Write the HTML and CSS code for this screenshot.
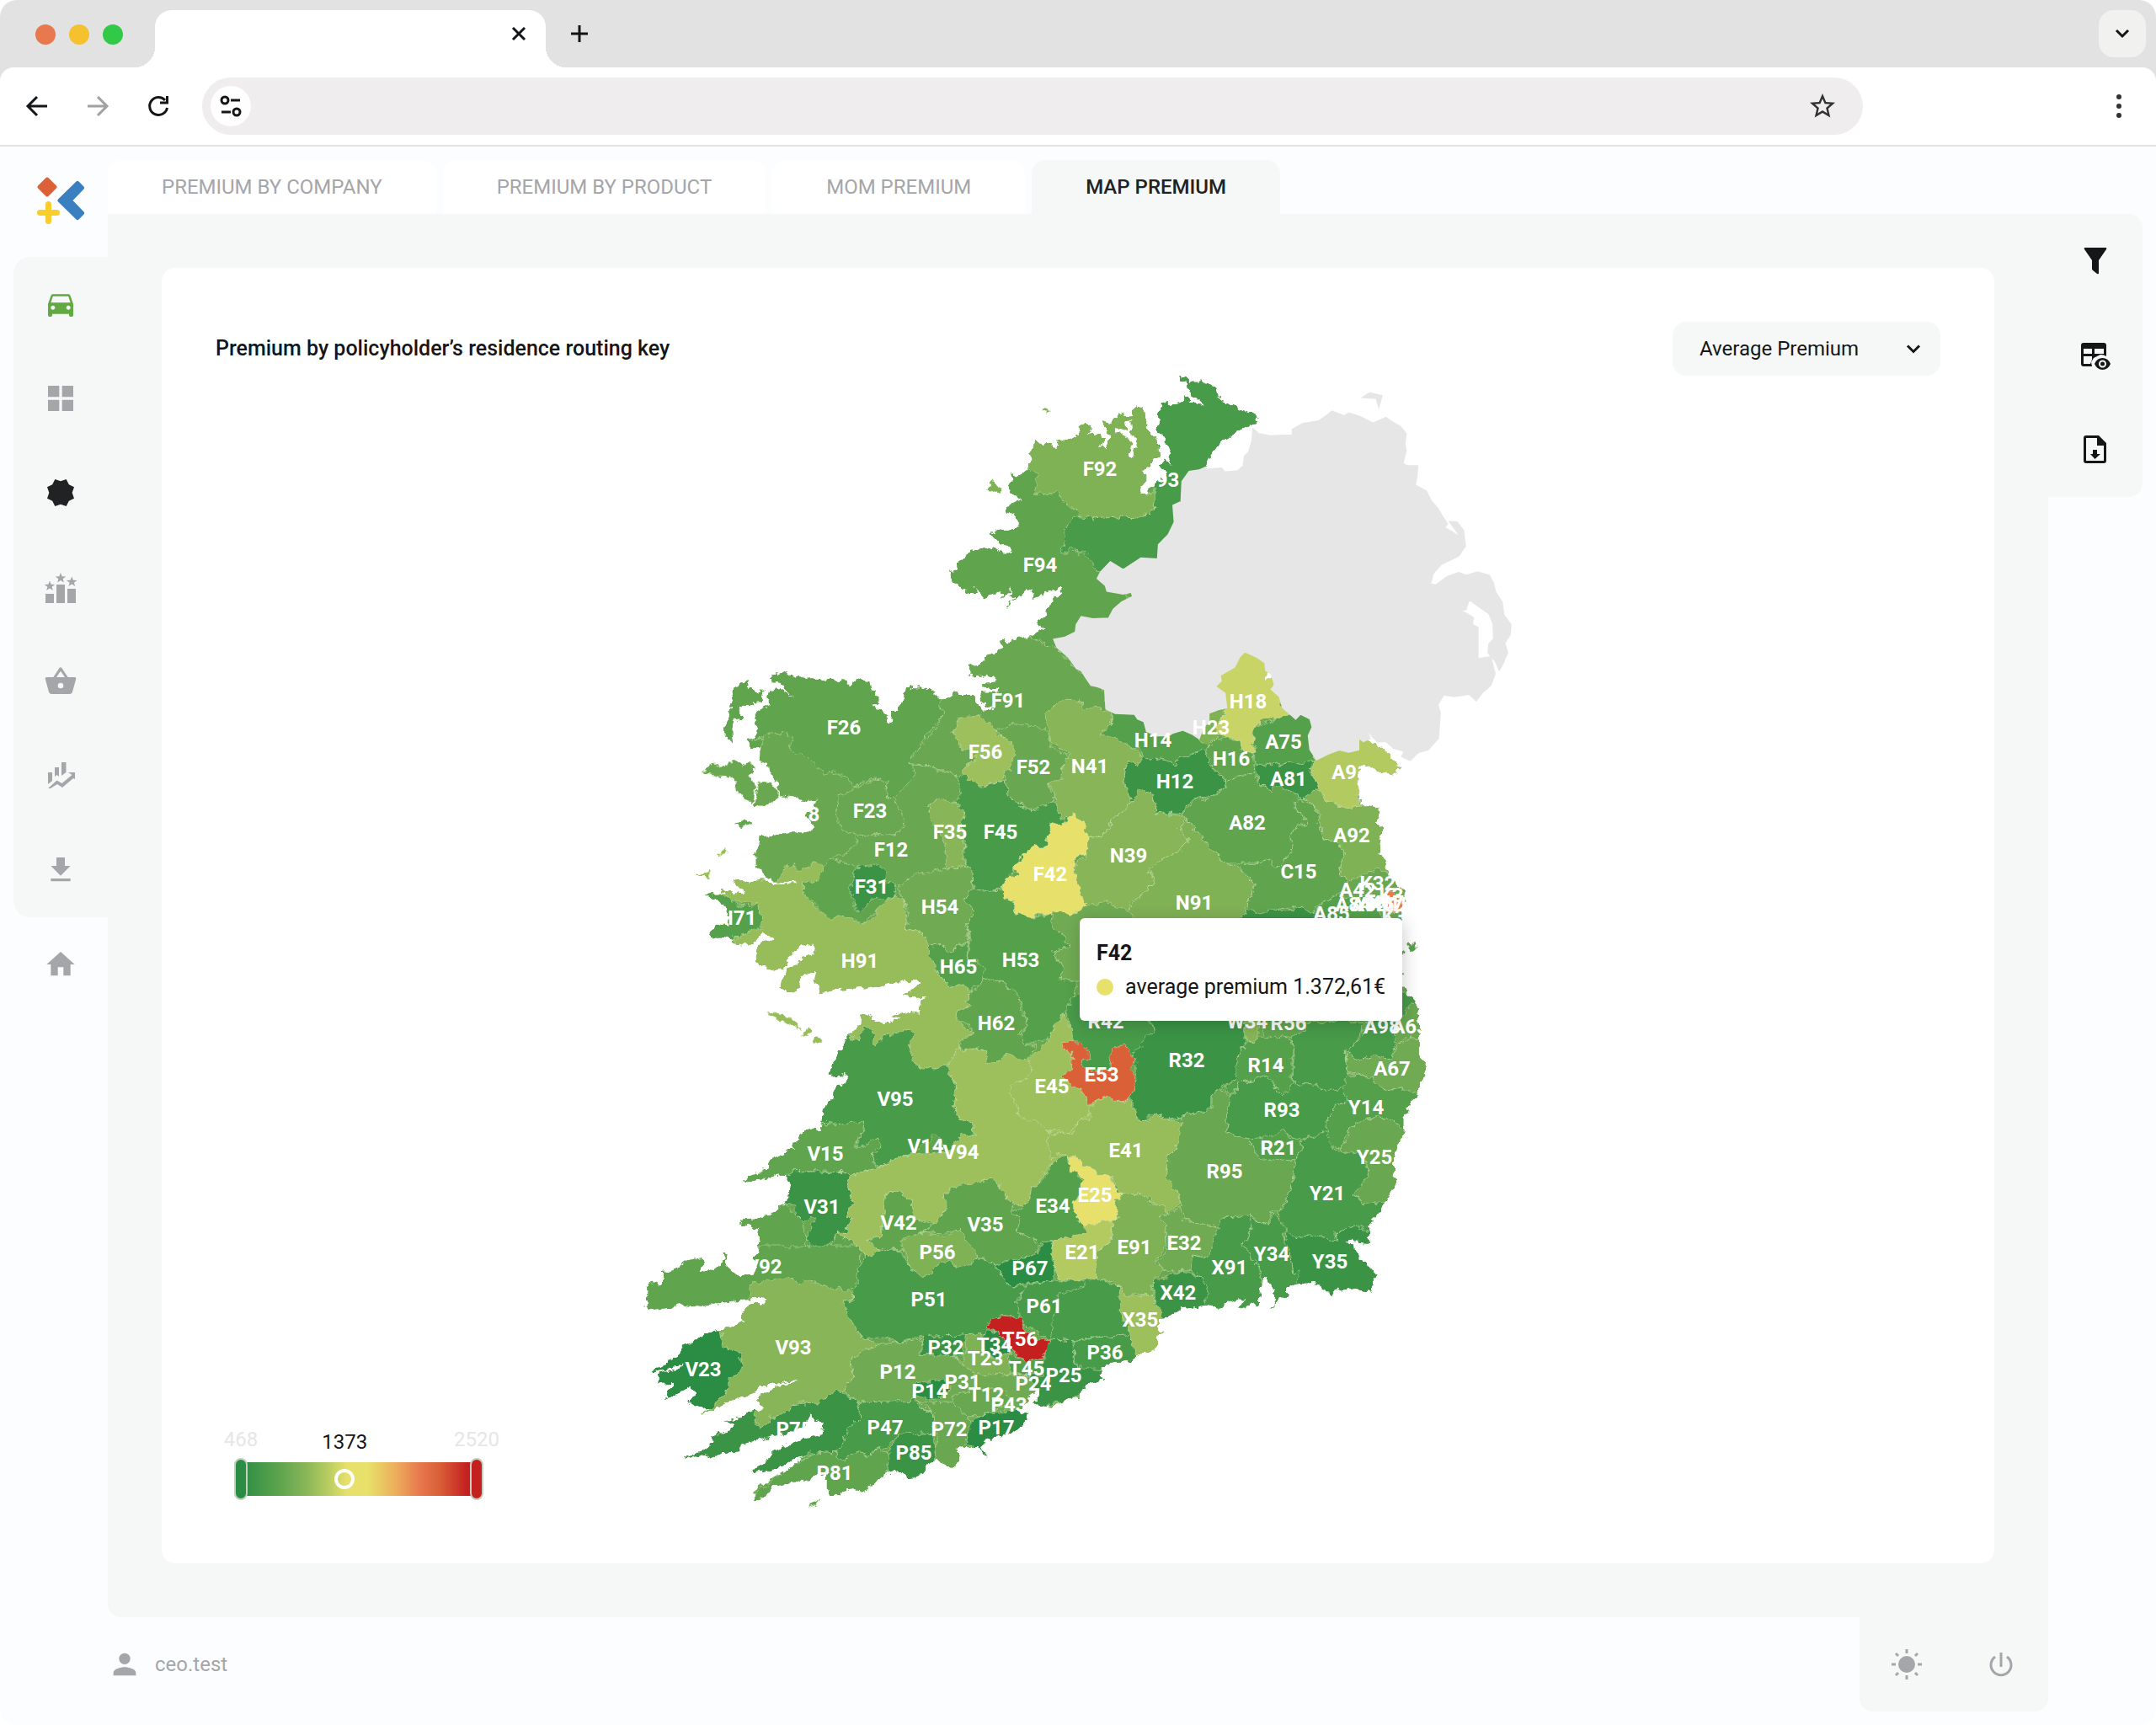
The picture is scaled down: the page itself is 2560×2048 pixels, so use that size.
FILE: index.html
```html
<!DOCTYPE html>
<html lang="en">
<head>
<meta charset="utf-8">
<title>Map premium</title>
<link rel="stylesheet" href="styles.css">
</head>
<body>
<header class="browser">
  <div class="tabstrip">
    <div class="lights"><span class="light red"></span><span class="light yellow"></span><span class="light green"></span></div>
    <div class="browser-tab">
      <button class="plain" type="button" aria-label="Close tab"><svg width="40" height="40" viewBox="-20 -20 40 40"><path class="ink s3" d="M-7-7 7 7M7-7-7 7"/></svg></button>
    </div>
    <button class="plain new-tab" type="button" aria-label="New tab"><svg width="40" height="40" viewBox="-20 -20 40 40"><path class="ink s3" d="M-10 0H10M0-10V10"/></svg></button>
    <button class="plain tab-search" type="button" aria-label="Search tabs"><svg width="32" height="32" viewBox="-16 -16 32 32"><path class="ink s3" d="M-7-4 0 3 7-4"/></svg></button>
  </div>
  <div class="toolbar">
    <button class="plain tool" type="button" aria-label="Back"><svg width="32" height="32" viewBox="-16 -16 32 32"><path class="ink s3" d="M12 0H-10M0-11-11 0 0 11"/></svg></button>
    <button class="plain tool faded" type="button" aria-label="Forward"><svg width="32" height="32" viewBox="-16 -16 32 32"><path class="ink s3" d="M-12 0H10M0-11 11 0 0 11"/></svg></button>
    <button class="plain tool" type="button" aria-label="Reload"><svg width="32" height="32" viewBox="-16 -16 32 32"><path class="ink s3" d="M8-7A10.500 10.500 0 1 0 10.500 2M2-4H10.500V-12"/></svg></button>
    <div class="address">
      <button class="plain site-info" type="button" aria-label="Site information"><svg width="32" height="32" viewBox="-16 -16 32 32"><circle class="ink s3" cx="-7" cy="-7" r="4"/><path class="ink s3" d="M0-7H11M-11 7H0"/><circle class="ink s3" cx="7" cy="7" r="4"/></svg></button>
      <input type="text" aria-label="Address">
      <button class="plain" type="button" aria-label="Bookmark"><svg width="36" height="36" viewBox="0 0 24 24"><path fill="#303234" d="M22 9.240l-7.190-.620L12 2 9.190 8.630 2 9.240l5.460 4.730L5.820 21 12 17.270 18.180 21l-1.630-7.030L22 9.240zM12 15.400l-3.760 2.270 1-4.280-3.320-2.880 4.380-.380L12 6.100l1.710 4.040 4.380.380-3.320 2.880 1 4.280L12 15.400z"/></svg></button>
    </div>
    <button class="plain tool" type="button" aria-label="Browser menu"><svg width="32" height="32" viewBox="-16 -16 32 32"><g fill="#303234"><circle cy="-11" r="3"/><circle r="3"/><circle cy="11" r="3"/></g></svg></button>
  </div>
</header>

<div class="app">
  <aside class="side">
    <a class="logo" href="#" aria-label="Home page">
      <svg width="60" height="60" viewBox="42 208 60 60">
        <path fill="#dc6038" stroke="#dc6038" stroke-width="4" stroke-linejoin="round" d="M56 212.500 65.500 222 56 231.500 46.500 222z"/>
        <path stroke="#f8ce2c" stroke-width="7" stroke-linecap="round" d="M57.500 242.500V262.500M47.500 252.500H67.500"/>
        <path fill="#3a80c0" stroke="#3a80c0" stroke-width="5" stroke-linejoin="round" d="M92 217.500 97.500 223 83 238 97.500 253 92 258.500 71 238z"/>
      </svg>
    </a>
    <nav class="side-nav" aria-label="Sections">
      <a href="#" class="green-icon" aria-label="Motor"><svg width="40" height="40" viewBox="0 0 24 24"><path d="M18.920 6.010C18.720 5.420 18.160 5 17.500 5h-11c-.660 0-1.210.420-1.420 1.010L3 12v8c0 .550.450 1 1 1h1c.550 0 1-.450 1-1v-1h12v1c0 .550.450 1 1 1h1c.550 0 1-.450 1-1v-8zM6.500 16c-.830 0-1.500-.670-1.500-1.500S5.670 13 6.500 13s1.500.670 1.500 1.500S7.330 16 6.500 16zm11 0c-.830 0-1.500-.670-1.500-1.500s.670-1.500 1.500-1.500 1.500.670 1.500 1.500-.670 1.500-1.500 1.500zM5 11l1.500-4.500h11L19 11z"/></svg></a>
      <a href="#" aria-label="Dashboard"><svg width="40" height="40" viewBox="0 0 24 24"><path d="M3 3h8v8H3zM13 3h8v8h-8zM3 13h8v8H3zM13 13h8v8h-8z"/></svg></a>
      <a href="#" class="current" aria-label="Premium" aria-current="page"><svg width="40" height="40" viewBox="-12 -12 24 24"><path d="M4-9.600 5.900-5.900 9.600-4 8.200 0 9.600 4 5.900 5.900 4 9.600 0 8.200-4 9.600-5.900 5.900-9.600 4-8.200 0-9.600-4-5.900-5.900-4-9.600 0-8.200z"/></svg></a>
      <a href="#" aria-label="Ranking"><svg width="40" height="40" viewBox="-20 -20 40 40"><path d="M-18 8h10V19h-10zM-5-3H5V19H-5zM8 2H18V19H8z"/><path d="M0-17l1.600 4.200 4.600.200-3.600 2.800 1.300 4.400L0-7.900l-3.900 2.500 1.300-4.400-3.600-2.800 4.600-.200z"/><path d="M-13-7.500l1.600 4.200 4.600.200-3.600 2.800 1.300 4.400L-13 1.600l-3.900 2.500 1.300-4.400-3.600-2.800 4.600-.200zM13.300-12.500l1.600 4.200 4.600.200-3.600 2.800 1.300 4.400-3.900-2.500-3.900 2.500 1.300-4.400L7-8.100l4.600-.200z"/></svg></a>
      <a href="#" aria-label="Products"><svg width="40" height="40" viewBox="0 0 24 24"><path fill-rule="evenodd" d="M17.200 9 12.800 2.400a1 1 0 0 0-1.700 0L6.800 9H2c-.600 0-1 .500-1 1l.100.300 2.500 9.200c.200.900 1 1.500 1.900 1.500h13c.900 0 1.700-.600 1.900-1.500L23 10c0-.600-.500-1-1-1zM9 9l3-4.400L15 9zm3 8a2 2 0 1 1 0-4 2 2 0 0 1 0 4z"/></svg></a>
      <a href="#" aria-label="Trends"><svg width="40" height="40" viewBox="-20 -20 40 40"><path d="M-15-4h5v10l-5 4zM-7-10h5V1l-2.500-2L-7 1zM1-16h5.500V-4L1 0zM-15 15-4.500 5.500 1.500 9 13.500-1 9-4h8V4l-2-1L2 14-4 10-12 15z"/></svg></a>
      <a href="#" aria-label="Downloads"><svg width="40" height="40" viewBox="0 0 24 24"><path d="M19 9h-4V3H9v6H5l7 7zM5 18v2h14v-2z"/></svg></a>
    </nav>
    <a class="side-home" href="#" aria-label="Home"><svg width="40" height="40" viewBox="0 0 24 24"><path d="M10 20v-6h4v6h5v-8h3L12 3 2 12h3v8z"/></svg></a>
  </aside>

  <main class="main">
    <nav class="tabs" aria-label="Premium views">
      <a href="#">PREMIUM BY COMPANY</a>
      <a href="#">PREMIUM BY PRODUCT</a>
      <a href="#">MOM PREMIUM</a>
      <a href="#" class="active" aria-current="page">MAP PREMIUM</a>
    </nav>
    <div class="panel">
      <section class="card">
        <div class="card-head">
          <h1>Premium by policyholder’s residence routing key</h1>
          <div class="picker">
            <select aria-label="Measure"><option>Average Premium</option></select>
            <svg width="24" height="24" viewBox="-12 -12 24 24"><path class="ink s3" d="M-7-3.500 0 3.500 7-3.500"/></svg>
          </div>
        </div>
        <div class="map-wrap">
          <svg class="map" viewBox="256 446 2048 1346" role="img" aria-label="Average premium by routing key, Ireland">
            <defs>
              <filter id="rough" x="-2%" y="-2%" width="104%" height="104%" color-interpolation-filters="sRGB">
                <feTurbulence type="fractalNoise" baseFrequency="0.12" numOctaves="3" seed="4"/>
                <feDisplacementMap in="SourceGraphic" scale="10" xChannelSelector="R" yChannelSelector="G"/>
                <feOffset dx="-1" dy="0"/>
              </filter>
              <clipPath id="land">
                <path transform="translate(1240 420) scale(.38265 .33333)" d="M427 80 440 85 452 98 490 98 520 112 538 125 540 145 550 168 585 180 612 198 640 208 658 215 665 232 655 248 630 262 600 278 580 295 548 315 530 340 515 370 500 405 500 700 350 800 80 830-20 780-55 600-55 430-45 420-40 370-35 345-28 310 0 318 25 318 38 340 48 325 45 305 60 308 95 300 112 285 108 258 128 242 140 252 148 262 130 290 150 278 160 292 180 285 190 305 170 325 190 335 205 300 200 275 186 262 188 238 205 245 215 235 228 215 240 212 275 220 272 208 290 190 305 188 315 215 318 240 312 262 335 280 345 300 362 330 362 360 345 380 330 400 300 420 325 430 328 448 300 480 295 500 312 505 330 480 350 455 378 440 390 420 370 410 358 395 375 382 397 400 388 375 393 350 385 325 370 295 348 268 357 240 355 215 365 195 362 178 385 175 395 185 410 178 437 172 437 148 455 165 450 178 498 182 480 160 458 150 450 130 447 102 430 95z"/>
                <path transform="translate(740 420) scale(.38265 .33333)" d="M1268 385 1255 405 1245 430 1220 440 1208 418 1212 455 1198 465 1205 495 1235 520 1200 540 1192 560 1215 575 1228 595 1228 620 1180 628 1138 645 1160 660 1170 675 1200 680 1208 710 1180 710 1145 685 1150 700 1115 697 1085 705 1065 720 1040 740 1042 765 1012 775 1020 800 1018 812 1070 838 1075 855 1097 855 1095 830 1122 868 1140 858 1178 845 1180 872 1205 830 1200 862 1222 868 1190 910 1198 890 1230 872 1250 848 1278 835 1272 872 1300 862 1330 845 1360 828 1365 850 1350 872 1338 870 1335 885 1312 908 1315 935 1288 958 1295 975 1315 978 1290 990 1268 1005 1225 1015 1195 1025 1188 1010 1180 1025 1180 1050 1150 1075 1130 1080 1115 1100 1080 1115 1078 1140 1090 1158 1130 1145 1165 1165 1125 1170 1118 1185 1165 1195 1160 1205 1120 1205 1108 1212 1115 1245 1155 1268 1120 1275 1100 1245 1085 1215 1040 1215 1028 1208 1015 1220 990 1230 960 1208 935 1190 878 1188 870 1230 850 1275 838 1275 832 1322 820 1290 790 1265 775 1250 800 1240 778 1215 790 1200 775 1195 770 1170 730 1155 715 1180 700 1178 695 1168 650 1160 620 1165 610 1155 560 1158 535 1150 500 1132 460 1152 465 1170 485 1175 530 1222 500 1205 485 1190 455 1200 448 1235 460 1250 430 1265 410 1280 410 1310 420 1345 415 1360 390 1370 400 1410 430 1405 435 1385 455 1370 450 1395 435 1410 430 1440 445 1470 475 1520 2000 1520 2000 1100 1400 385z"/>
                <path transform="translate(740 420) scale(.38265 .33333)" d="M385 1165 395 1190 425 1210 438 1200 430 1240 400 1240 412 1250 385 1250 360 1262 372 1290 345 1310 340 1340 345 1380 315 1365 318 1330 330 1300 335 1265 340 1240 330 1225 345 1190z"/>
                <path transform="translate(740 780) scale(.35714 .33333)" d="M460 350 475 380 515 420 520 470 525 495 580 505 620 515 645 508 640 530 600 560 620 580 640 610 610 625 530 625 510 635 455 640 450 680 443 715 445 750 480 780 515 803 575 796 580 804 510 812 465 790 425 805 400 795 368 795 375 810 410 830 410 850 380 845 370 835 322 828 350 845 315 845 280 850 300 862 345 885 345 900 350 930 355 960 315 950 300 975 285 992 330 995 370 1000 370 1020 400 1030 440 1010 465 980 505 995 505 1015 470 1010 450 1040 445 1070 445 1095 470 1095 490 1115 535 1110 555 1070 590 1030 640 1020 635 1060 600 1070 570 1100 545 1110 540 1140 530 1155 525 1185 580 1190 590 1160 605 1130 640 1120 635 1145 650 1175 655 1195 700 1185 780 1180 850 1172 900 1165 940 1155 990 1155 970 1180 935 1200 960 1215 1020 1210 990 1225 985 1255 995 1280 965 1260 940 1268 900 1275 925 1290 880 1300 868 1305 830 1285 800 1272 788 1290 790 1315 750 1350 800 1420 2000 1420 2000 250 460 250z"/>
                <path transform="translate(1240 840) scale(.35714 .33333)" d="M-100-100 1045-100 1045 105 1080 105 1090 120 1140 160 1180 200 1190 215 1155 240 1120 230 1085 205 1050 210 1045 260 1045 310 1060 345 1118 360 1108 410 1130 425 1115 470 1122 520 1135 560 1150 600 1190 640 1205 655 1195 690 1190 730 1195 750 1180 780 1170 800 1165 1000 1213 1025 1245 1100 1240 1200-100 1200z"/>
                <path transform="translate(740 1180) scale(.35714 .33333)" d="M748 150 735 185 720 205 705 250 682 290 740 285 750 300 735 320 705 345 695 380 668 420 665 460 660 490 630 478 600 490 585 500 590 518 570 530 565 548 530 570 485 600 480 625 440 640 405 667 440 665 480 655 530 645 550 655 560 665 555 700 550 745 520 760 490 790 445 800 400 802 395 820 455 838 458 870 455 905 440 1020 1600 1020 1600 100z"/>
                <path transform="translate(740 1460) scale(.40816 .33333)" d="M395 0 402 60 385 95 395 120 378 155 345 160 320 148 300 125 305 85 290 82 298 110 265 140 222 155 235 120 230 100 185 110 150 145 120 150 120 185 105 205 100 180 75 200 70 220 68 275 80 285 145 278 165 260 180 270 230 275 290 258 330 250 375 245 415 240 410 265 370 265 365 285 345 300 350 325 320 345 285 358 245 370 215 390 175 420 165 445 120 480 85 505 130 500 175 475 170 490 135 505 102 515 105 548 155 545 130 580 125 605 165 580 200 555 212 590 190 615 230 635 255 632 232 658 270 635 300 615 335 600 380 580 410 555 460 545 515 535 490 550 450 558 430 575 400 590 390 610 410 635 400 640 375 650 300 685 325 690 315 715 250 735 265 760 245 780 205 800 178 815 230 805 240 795 255 812 290 795 340 790 345 765 405 745 440 735 500 715 540 690 540 660 585 690 580 730 550 735 500 760 440 790 380 865 440 855 480 830 535 800 490 850 430 890 385 930 390 960 415 955 440 910 475 905 530 895 600 860 595 885 595 925 600 945 625 945 660 920 695 935 740 895 775 868 810 860 840 885 870 870 890 830 920 825 965 848 980 810 970 785 990 765 1005 780 1040 780 1060 812 1045 775 1060 745 1085 740 1130 725 1175 685 1180 650 1150 655 1190 600 1180 590 1220 570 1200 620 1250 630 1290 605 1330 600 1330 575 1350 555 1405 530 1385 520 1400 490 1430 470 1480 470 1500 437 1545 430 1560 380 1560 0z"/>
                <path transform="translate(1240 1160) scale(.33333)" d="M300 1100 275 1200 330 1350 400 1320 405 1280 425 1262 385 1250 365 1235 390 1215 430 1215 455 1205 490 1180 570 1170 640 1175 665 1150 715 1150 700 1175 760 1165 775 1130 780 1070 795 1065 800 1080 825 1115 825 1150 810 1180 835 1150 870 1130 870 1110 890 1095 915 1045 890 1070 880 1095 960 1088 990 1100 1020 1130 1060 1110 1110 1108 1165 1122 1170 1090 1190 1055 1165 1040 1145 1010 1125 1000 1110 975 1105 950 1075 945 1095 925 1105 942 1160 948 1160 900 1165 880 1205 820 1250 750 1258 720 1245 690 1245 650 1275 570 1285 550 1285 500 1310 440 1335 420 1335 400 1365 310 1340 290 1340 200 1330 100 1300 65 1270 20 0 20 0 1100z"/>
              </clipPath>
            </defs>

            <g filter="url(#rough)">
              <g clip-path="url(#land)">
                <rect x="700" y="400" width="1100" height="1450" class="c5"/>

                <g class="north-west">
                  <path class="c4" d="M950 380H1568V1100L1345 1048 1308 1035 1305 1020 1272 1018 1262 1000H950z"/>
                  <path class="c5" d="M1050 1000H1262L1272 1018 1308 1035 1345 1048 1400 1115 1500 1200 1500 1270 1380 1320 1270 1400 1060 1510 940 1465 895 1465 895 1440 920 1410 925 1390 945 1375 975 1330 998 1285 990 1278 980 1245 990 1230z"/>
                </g>
                <g class="north-east">
                  <path class="c2" d="M62 630 90 600 85 580 110 575 150 590 185 575 205 585 245 578 290 585 330 570 345 530 345 480 330 440 330 60 700 60 700 300 440 500 430 780 160 775 150 740 125 705 110 715 88 688 75 712 55 710 65 680z"/>
                  <path class="c7" d="M-60 300-45 420-20 428-22 470-30 495 0 500 30 500 45 490 65 530 100 555 118 588 140 580 150 590 185 575 205 585 245 578 290 585 330 570 345 530 345 480 320 500 330 440 368 360 333 270 330 150-60 150z"/>
                </g>
                <g class="west">
                  <path class="c4" d="M300 20H1060V150L1055 185 1070 205 1020 265 995 300 985 325 960 350 958 380 965 385 970 430 940 465 915 490 900 505 875 495 880 445 835 432 800 445 765 465 755 430 700 410 675 420 640 380 605 350 565 340 555 320 570 290 535 265 500 275 400 300 300 310z"/>
                  <path class="c5" d="M765 465 800 455 835 435 880 440 875 495 905 505 920 540 930 570 940 600 920 625 870 635 800 635 735 620 720 590 712 540 715 495 760 478z"/>
                  <path class="line" d="M775 635 778 665 750 695 715 710 690 715 685 735 650 790M958 380 1010 385 1050 405 1085 415 1110 420"/>
                  <path class="c4" d="M600 800 640 790 690 715 755 740 905 850 850 900 800 945 690 930 600 840z"/>
                  <path class="c8" d="M1015 535 1055 505 1110 520 1135 545 1125 600 1140 640 1135 745 1070 755 1080 710 1065 640 1035 600 1015 570z"/>
                  <path class="c2" d="M1110 420 1150 430 1200 455 1275 445 1280 490 1310 520 1360 545 1400 525 1450 520 1480 560 1520 580 1430 680 1300 760 1270 830 1220 835 1165 825 1160 745 1140 740 1140 640 1125 600 1135 545 1100 520 1125 490z"/>
                  <path class="c5" d="M1240 265 1300 238 1405 255 1420 290 1425 325 1480 350 1460 400 1475 440 1415 455 1435 490 1430 520 1360 545 1310 520 1280 490 1275 445 1270 410 1300 350 1275 290z"/>
                  <path class="c10" d="M1125 215 1190 210 1240 255 1245 280 1275 285 1295 315 1305 350 1290 400 1270 410 1265 445 1225 450 1190 460 1150 435 1130 415 1145 385 1175 365 1150 325 1120 325 1120 295 1100 265z"/>
                  <path class="c6" d="M1430 910 1425 950 1460 985 1485 1030 1430 1050 1450 1080 1465 1115 1450 1145 1500 1150 1568 1160 1800 1160 1800 850 1568 850z"/>
                </g>
                <g class="east">
                  <path class="c8" d="M205 90 245 110 290 140 315 150 328 190 312 210 280 185 265 235 275 290 290 335 265 370 225 395 215 440 190 465 150 460 120 390 60 400 40 345 35 300 15 270 65 255 60 220 85 160 55 145 20 120 20 75 3 40 12 20 40-10 80-33 125-20 135 8 170-8 228 25 225 65z"/>
                  <path class="c8" d="M290 335 325 293 350 300 380 340 365 380 400 375 475 390 450 430 480 480 440 520 400 535 375 560 350 580 370 620 330 665 300 690 280 725 245 715 215 690 150 705 140 715 105 640 100 560 145 525 150 460 190 465 215 440 225 395 265 370z"/>
                  <path class="c7" d="M475 400 520 450 560 510 610 555 665 585 705 630 680 690 665 750 660 800 300 800 300 745 280 725 330 665 370 620 350 580 400 535 440 520 480 480 450 430z"/>
                  <path class="c1" d="M265 235 280 185 312 210 330 170 355 190 370 180 425 190 440 210 445 185 500 160 540 150 550 190 570 225 610 260 605 290 580 300 545 330 545 315 515 318 480 345 460 380 400 375 365 380 380 340 350 300 325 293 290 335 275 290z"/>
                  <path class="c3" d="M190 95 225 65 228 15 300 15 330 30 350 60 540 60 545 150 500 160 445 185 440 210 425 190 370 180 355 190 330 170 322 140 290 140 245 110z"/>
                  <path class="c4" d="M575 110 655 115 660 155 700 165 710 200 700 235 610 260 570 225 550 190 540 145 550 135z"/>
                  <path class="c7" d="M540 0 600-10 605 50 590 80 575 110 550 135 540 130 515 100 520 60z"/>
                  <path class="c3" d="M690 80 730 55 770 45 800 25 830 15 905 5 905 170 900 185 860 200 825 195 790 205 760 195 740 205 705 200 700 165 705 150 690 110z"/>
                  <path class="c1" d="M700 205 740 205 760 195 790 205 825 195 860 200 905 185 890 230 915 285 865 330 845 325 835 300 780 290 765 280 755 295 715 270 710 235z"/>
                  <path class="c7" d="M865 325 915 285 930 330 980 335 985 360 1060 350 1140 350 1160 600 1110 575 1060 600 1015 615 980 590 1000 520 970 475 935 470 915 420 915 370 890 345z"/>
                  <path class="c11" d="M895 185 905 120 980 80 1200 90 1220 220 1130 260 1045 260 1045 320 1060 350 985 360 980 340 945 330 930 330 920 285 915 280 890 235z"/>
                  <path class="c4" d="M845 330 890 345 915 370 915 420 935 470 970 475 1000 520 980 590 1015 615 1000 650 960 675 900 710 890 740 860 715 800 715 750 720 730 745 680 745 680 690 705 630 665 585 640 555 710 555 755 540 780 575 830 495 820 460 830 430 875 415 860 380 835 365z"/>
                  <path class="c4" d="M460 380 515 318 545 330 605 290 610 260 700 235 715 270 755 295 765 280 835 300 845 325 865 330 835 340 835 365 860 380 875 415 830 430 820 460 830 495 800 545 780 575 760 560 755 540 710 555 640 555 610 555 560 510 520 450 475 400z"/>
                  <path class="c1" d="M655 750 680 720 720 735 760 715 800 725 840 710 880 725 900 740 900 800 650 800z"/>
                  <path class="c3" d="M900 740 930 690 990 665 1030 700 1060 670 1110 680 1130 800 900 800z"/>
                  <path class="hot1" d="M1120 665 1150 655 1195 690 1192 725 1150 735 1130 700z"/>
                </g>
                <g class="north-east">
                  <path class="c12" d="M500 1040H740V1260L765 1285 720 1300 680 1305 645 1345 655 1370 648 1395 660 1420 640 1422 612 1410 612 1375 560 1365 535 1340 540 1300 568 1285 560 1210 500 1185z"/>
                </g>
                <g class="west">
                  <path class="yellow" d="M1505 558 1535 585 1540 610 1552 640 1545 705 1510 705 1495 740 1510 800 1530 860 1545 890 1485 920 1455 905 1430 905 1425 920 1380 918 1360 928 1305 915 1298 865 1270 862 1262 830 1270 795 1290 780 1320 775 1300 750 1335 705 1365 675 1410 675 1410 645 1425 590 1470 595 1485 565z"/>
                  <path class="c6" d="M915 820 975 770 1000 775 1070 755 1135 745 1160 745 1165 825 1140 865 1170 900 1145 950 1150 1010 1085 1050 1060 1025 1015 1030 1010 1000 975 975 945 970 950 910z"/>
                  <path class="c3" d="M1165 825 1220 835 1270 830 1270 862 1298 865 1305 915 1360 928 1425 920 1425 950 1460 985 1485 1030 1430 1050 1465 1115 1450 1145 1500 1155 1510 1180 1490 1260 1450 1300 1410 1365 1340 1380 1320 1350 1350 1310 1310 1200 1280 1180 1265 1150 1205 1150 1180 1100 1145 1070 1155 1020 1145 950 1170 900 1140 865z"/>
                  <path class="c9" d="M905 850 935 870 945 930 945 970 975 975 1010 1000 1025 1040 1015 1060 1035 1085 1060 1150 1100 1175 1140 1170 1155 1195 1145 1225 1160 1245 1110 1260 1110 1285 1170 1345 1120 1365 1120 1400 1080 1450 1040 1470 1000 1470 965 1445 700 1400 700 1280 440 1250 380 1030 370 985 460 970 465 930 450 880 350 870 240 840 360 780 515 800 545 745 570 740 575 765 600 765 630 730 675 745 650 790 630 805 600 800 600 840 640 890 690 930 740 925 800 945 825 940 850 900 875 870z"/>
                  <path class="c3" d="M1015 1030 1060 1025 1085 1050 1150 1015 1145 1070 1180 1090 1205 1110 1200 1150 1165 1195 1140 1170 1100 1175 1060 1150 1045 1115 1035 1085 1015 1060z"/>
                  <path class="c1" d="M775 750 830 738 865 745 880 770 880 800 905 805 910 845 870 870 850 855 820 870 810 890 780 908 770 865 755 830 770 790z"/>
                  <path class="c3" d="M240 840 355 850 360 875 430 890 450 875 465 930 455 965 400 985 380 1000 240 1020z"/>
                </g>
                <g class="mid-west">
                  <path class="c2" d="M600 150 750 150 785 165 805 120 825 125 840 185 880 140 890 150 950 125 970 140 955 190 965 245 1000 270 1040 270 1080 255 1095 260 1095 300 1110 330 1100 400 1120 440 1160 455 1168 500 1120 510 1100 560 960 570 900 590 850 620 830 570 860 545 850 520 770 555 800 490 805 455 740 465 665 460 600 440z"/>
                  <path class="c4" d="M660 460 740 465 805 450 800 490 765 550 850 520 862 545 830 570 842 622 810 628 755 655 740 635 570 632 555 650 380 690 380 460z"/>
                  <path class="c4" d="M380 745 540 745 600 810 610 870 600 935 680 930 715 850 780 900 815 940 790 1020 380 1020z"/>
                  <path class="c1" d="M540 650 570 632 740 635 755 655 745 680 770 740 745 780 760 800 740 850 715 850 690 890 680 930 600 935 630 890 610 870 640 800 600 810 580 790 575 755 540 745z"/>
                  <path class="c10" d="M1080 255 1120 195 1205 195 1215 240 1240 245 1275 215 1345 240 1410 170 1465 70 1500 140 1568 200 1650 200 1650 600 1480 570 1430 600 1395 650 1390 680 1360 685 1355 730 1335 755 1300 750 1275 725 1275 705 1245 675 1225 658 1190 665 1150 690 1110 685 1070 715 1080 755 1065 790 1040 815 980 805 965 760 960 730 910 700 875 710 870 780 860 870 820 870 850 915 815 940 780 900 740 870 712 850 740 850 760 800 745 780 770 740 745 680 755 655 810 628 850 620 900 590 960 570 1080 560 1130 500 1168 505 1165 460 1120 440 1100 400 1110 330 1095 300z"/>
                  <path class="line" d="M1345 240 1362 265 1345 305 1295 320 1290 360 1315 400 1320 440 1380 455 1415 490 1440 480 1485 505 1510 455 1555 430 1555 395M1415 490 1425 540 1430 600"/>
                  <path class="c4" d="M1155-5 1205-50 1265-50 1280-15 1315-10 1320 50 1350 110 1315 145 1340 180 1375 185 1345 240 1275 215 1240 245 1210 240 1205 195 1120 195 1130 160 1170 145 1145 105 1110 85 1110 60 1160 45 1145 25z"/>
                  <path class="c4" d="M985 555 1040 495 1065 530 1080 565 1020 570 960 570z"/>
                  <path class="c4" d="M875 710 910 700 960 730 965 760 980 805 1025 820 1000 850 935 880 935 910 850 912 815 875 860 870z"/>
                  <path class="c4" d="M1070 715 1110 685 1190 665 1225 658 1275 705 1275 725 1300 750 1295 780 1320 810 1315 845 1385 890 1380 930 1330 940 1290 960 1230 965 1180 930 1140 880 1120 840 1065 855 1000 850 1025 825 1065 790 1080 755z"/>
                  <path class="c3" d="M1430 600 1480 570 1485 600 1530 670 1600 690 1600 850 1430 880 1385 890 1315 845 1320 810 1295 775 1335 755 1355 730 1360 685 1390 680z"/>
                </g>
                <g class="south-west">
                  <path class="c4" d="M50 60H690V230L375 240 350 300 50 300z"/>
                  <path class="c8" d="M375 190 420 180 495 175 515 195 530 180 605 205 660 215 678 240 640 265 655 300 680 350 700 385 755 410 700 430 665 465 675 515 640 575 600 590 575 615 500 620 475 655 430 670 405 715 385 680 300 680 200 680 260 630 295 590 310 540 345 500 345 440 290 415 285 355 340 300 370 235z"/>
                  <path class="c0" d="M50 400 285 355 290 415 345 440 345 500 310 540 295 590 260 630 220 660 50 640z"/>
                  <path class="c1" d="M385 690 405 715 430 670 475 655 500 620 575 615 600 590 625 573 685 610 690 670 655 715 640 770 620 790 530 800 500 860 350 900 150 830 250 670 385 640z"/>
                  <path class="c6" d="M755 410 800 400 870 390 865 445 960 445 1010 500 1050 515 1130 515 1200 520 1200 640 1020 680 870 640 850 610 690 615 640 575 675 515 665 465 700 430z"/>
                  <path class="c4" d="M370 960 470 860 560 795 620 790 640 825 690 790 720 800 740 780 780 800 770 870 700 960 540 1000z"/>
                  <path class="c2" d="M690 615 850 610 870 640 905 650 905 725 800 730 770 775 740 780 720 800 690 790 640 825 620 790 640 770 655 715 690 670z"/>
                  <path class="c2" d="M680 160 690 130 715 95 750 70 810 75 825 110 850 150 885 165 930 110 980 125 1040 100 1080 125 1130 205 1180 200 1150 245 1160 320 1100 305 1060 345 1080 370 1000 375 870 380 800 400 760 385 700 385 680 350 655 300 640 265 678 240 665 205 685 190z"/>
                  <path class="c7" d="M810 40 870 10 935 25 985-5 1000 40 1040 95 995 135 930 110 885 168 840 145z"/>
                  <path class="c2" d="M1180 195 1250 180 1340 175 1370 168 1440 200 1450 260 1455 320 1480 350 1475 375 1380 380 1310 395 1245 390 1170 340 1155 310 1150 250z"/>
                  <path class="line" d="M1340 175V205L1270 230 1255 310 1245 390"/>
                  <path class="c0" d="M1085 125 1180 95 1215 80 1220 45 1250 40 1255 180 1180 190 1130 205z"/>
                  <path class="c2" d="M1310 400 1380 380 1480 375 1500 440 1500 490 1420 500 1320 500z"/>
                  <path class="c1" d="M1170 470 1225 450 1245 390 1310 395 1315 490 1420 500 1420 560 1200 640 1200 560z"/>
                  <path class="c1" d="M870 380 1000 375 990 420 1000 450 870 445z"/>
                  <path class="c7" d="M1000 375 1045 370 1050 400 1130 440 1130 515 1030 515 990 480 1000 440z"/>
                  <path class="c0" d="M1050 385 1060 355 1130 390 1130 430 1090 460 1050 430z"/>
                  <path class="c3" d="M1125 440 1175 468 1225 455 1225 520 1130 515z"/>
                  <path class="hot3" d="M1060 345 1085 310 1135 315 1160 315 1170 365 1190 370 1200 395 1245 388 1240 415 1225 450 1175 468 1130 430 1105 380z"/>
                  <path class="c0" d="M850 590 855 545 930 535 955 570 910 605z"/>
                  <path class="c5" d="M960 590 1010 570 1110 570 1130 620 1040 665 975 665z"/>
                  <path class="c5" d="M860 610 900 615 960 610 1020 690 1005 790 970 860 910 830 915 750 905 650z"/>
                  <path class="c1" d="M800 730 905 725 915 800 915 850 840 900 770 870 775 800z"/>
                  <path class="c0" d="M1015 680 1060 655 1180 635 1195 700 1060 760 1070 820 1000 760z"/>
                </g>
                <g class="south-east">
                  <path class="c2" d="M105 70 80 120 110 225 100 260 150 330 240 325 350 260 390 190 380 160 330 100 120 60z"/>
                  <path class="c1" d="M380 100H720V220L690 290 690 360 640 390 600 420 600 470 520 490 440 505 400 480 375 490 375 510 340 512 320 450 305 430 330 370 325 290 320 265 350 240 390 190z"/>
                  <path class="c9" d="M165 460 220 425 265 447 305 435 340 512 375 510 400 480 440 505 490 515 480 600 440 640 450 730 490 780 480 810 440 840 365 780 280 770 240 705 130 700 90 640 60 625 20 650 20 560 110 560 120 510 165 505z"/>
                  <path class="hot2" d="M65 230 135 235 160 265 160 295 135 300 150 330 240 325 245 255 290 240 300 260 330 290 310 330 328 375 305 435 265 447 220 425 160 455 135 400 100 390 70 350 100 330 105 265 70 262z"/>
                  <path class="c7" d="M245 865 268 860 250 790 280 770 365 780 380 810 430 815 440 840 415 860 435 890 440 950 395 1015 430 1045 390 1085 390 1140 320 1130 300 1140 265 1100 245 1085 190 1080 190 980 245 940 240 880z"/>
                  <path class="yellow" d="M90 635 130 650 140 675 190 685 195 705 240 705 255 740 255 760 280 770 270 790 250 790 268 860 150 880 110 860 105 800 130 780 140 715 100 690z"/>
                  <path class="c11" d="M35 940 110 920 150 910 140 880 240 865 245 940 190 980 190 1075 130 1080 50 1070 35 1040 40 1010 25 985z"/>
                  <path class="c5" d="M440 505 520 490 600 470 600 420 630 400 670 430 650 500 655 555 730 580 770 640 850 655 895 660 890 720 850 830 810 840 800 880 760 875 740 850 640 855 630 895 480 860 490 780 440 720 440 640 480 600 490 515z"/>
                  <path class="c3" d="M720 230 790 210 850 210 885 230 885 370 890 400 850 425 800 355 700 375 670 420 640 400 690 360 690 290z"/>
                  <path class="c2" d="M670 430 700 375 800 355 850 425 890 380 960 380 1010 410 1080 390 1080 440 1020 480 1005 530 1015 545 900 590 860 540 830 570 730 580 655 555 650 500z"/>
                  <path class="c3" d="M730 580 830 560 860 535 880 580 915 580 915 620 895 660 770 650z"/>
                  <path class="c2" d="M885 160H1150L1100 250 1075 265 1085 350 1080 390 1010 410 960 380 890 380z"/>
                  <path class="c4" d="M765 130H900L940 190 880 215 790 215z"/>
                  <path class="c8" d="M720 130H765V210L750 240 720 215z"/>
                  <path class="c2" d="M1100 250 1140 200 1240 60 1340 60 1300 200 1240 260 1240 295 1180 280 1130 300 1075 262z"/>
                  <path class="c5" d="M1260 160 1310 100 1350 100 1350 230 1250 230z"/>
                  <path class="c6" d="M1075 262 1130 300 1180 280 1240 295 1260 230 1300 220 1400 230 1400 400 1330 425 1290 420 1280 395 1225 405 1180 390 1150 350 1085 340z"/>
                  <path class="c3" d="M1080 350 1150 350 1220 405 1280 395 1345 425 1300 560 1250 515 1180 500 1130 510 1085 545 1060 610 1020 600 1005 525 1020 480 1080 440 1065 400z"/>
                  <path class="c5" d="M1085 545 1130 510 1180 500 1250 515 1300 560 1300 750 1200 830 1100 780 1160 700 1150 660 1060 630 1060 610 1085 570z"/>
                  <path class="c2" d="M895 660 915 620 920 590 1010 545 1025 605 1060 630 1125 620 1160 700 1130 750 1100 780 1150 805 1230 805 1180 960 1110 885 1035 910 1040 940 960 920 900 935 850 900 835 840 850 830 890 720z"/>
                  <path class="c1" d="M870 905 900 935 960 920 1040 940 1035 910 1110 885 1250 940 1250 1180 870 1130 890 1060 880 980 850 950z"/>
                  <path class="c2" d="M740 850 760 875 805 880 815 840 850 870 870 905 850 920 880 980 890 1060 920 1040 870 1180 790 1200 770 1040 735 990 710 950 740 910z"/>
                  <path class="c2" d="M635 860 680 850 740 850 740 910 710 950 735 990 770 1040 790 1200 560 1200 585 1110 550 1060 520 1040 530 990 580 1000 610 900z"/>
                  <path class="c6" d="M415 860 490 815 500 865 630 895 610 910 600 970 580 1000 530 990 525 1045 480 1050 430 1045 400 1010 440 980 435 890z"/>
                  <path class="c10" d="M265 1100 300 1140 385 1135 440 1190 440 1300 430 1360 380 1400 330 1350 310 1260 275 1200z"/>
                  <path class="c1" d="M390 1085 480 1050 550 1060 585 1110 570 1200 440 1225 400 1165z"/>
                </g>
              </g>

              <!-- islands -->
              <g class="west">
                <path class="c5" d="M260 412 300 380 330 392 370 370 400 385 420 368 440 400 425 420 430 440 445 460 430 530 410 505 375 475 370 430 310 425z"/>
                <path class="c5" d="M450 450 490 440 515 470 520 500 480 530 440 530z"/>
                <path class="c4" d="M415 290 470 290 460 325 430 330z"/>
                <path class="c4" d="M372 600 410 575 430 595 400 608z"/>
                <path class="c9" d="M480 1270 510 1268 560 1282 595 1330 540 1300zM600 1345 620 1318 630 1330 605 1357zM635 1365 655 1355 665 1365 650 1380zM247 775 290 765 290 790zM320 700 345 685 345 695 325 710z"/>
              </g>
              <g class="north-west">
                <path class="c7" d="M1135 480 1150 450 1175 490 1140 497zM1298 190 1308 190 1328 208 1320 212z"/>
              </g>
              <g class="south-west">
                <path class="c4" d="M543 990 555 970 575 962 570 980z"/>
              </g>
              <g class="east">
                <path class="c3" d="M1210 840 1235 830 1240 860 1220 865zM1185 940 1205 940 1200 955zM1190 860 1200 870 1190 890z"/>
              </g>

              <!-- sea inlets -->
              <g class="north-east water">
                <path d="M258 238 270 240 272 285 290 305 285 335 275 370 264 366 274 330 268 303 250 288 220 278 225 268 262 275z"/>
              </g>
              <g class="west water">
                <path d="M430 400 485 390 490 430 440 440z"/>
              </g>
            </g>

            <!-- Northern Ireland, no data -->
            <g class="north-east neutral">
              <path d="M648 268 665 285 700 293 770 290 770 270 800 250 850 240 865 230 893 205 930 222 945 212 980 225 1020 248 1060 228 1075 240 1105 260 1122 285 1118 320 1122 345 1112 390 1125 400 1158 400 1155 440 1150 468 1185 490 1200 525 1220 550 1235 580 1250 605 1242 620 1265 635 1285 650 1290 680 1285 640 1258 598 1280 600 1300 630 1306 685 1285 720 1230 750 1205 785 1198 820 1215 825 1250 795 1285 780 1310 790 1345 778 1380 790 1392 815 1400 850 1420 885 1425 930 1447 965 1445 1000 1428 1030 1437 1065 1420 1110 1412 1125 1400 1095 1378 1065 1380 1035 1395 1015 1393 960 1380 925 1355 905 1318 875 1308 910 1295 915 1330 940 1328 965 1345 975 1345 1080 1325 1090 1385 1080 1398 1140 1385 1180 1360 1205 1340 1235 1320 1212 1270 1220 1245 1215 1253 1187 1220 1250 1228 1280 1222 1370 1190 1410 1160 1420 1135 1448 1110 1435 1118 1415 1085 1405 1060 1380 1035 1382 1020 1365 998 1330 1010 1370 990 1380 975 1368 975 1410 945 1418 915 1410 880 1425 845 1445 825 1410 820 1360 832 1330 825 1300 795 1283 780 1300 765 1285 740 1260 730 1220 705 1195 715 1180 705 1140 688 1128 685 1100 660 1080 622 1060 605 1080 590 1115 545 1145 548 1165 530 1185 560 1210 565 1260 545 1265 510 1280 510 1305 490 1340 480 1370 460 1355 430 1340 400 1350 385 1360 350 1360 318 1345 310 1310 290 1300 280 1283 220 1280 192 1265 188 1195 165 1185 145 1180 130 1155 115 1128 100 1120 75 1080 40 1045 30 1018 65 1010 97 992 100 965 115 937 150 945 200 943 215 910 240 885 275 865 270 848 245 855 195 845 190 825 165 800 175 778 205 742 245 770 300 728 352 732 355 680 385 645 404 600 400 540 425 527 428 455 450 420 480 415 500 405 505 412 550 408 560 422 600 418 618 400 622 365 635 350 645 310z"/>
              <path d="M990 155 1010 140 1047 150 1038 188 1030 158z"/>
            </g>

            <g class="labels">
              <text x="1306" y="565">F92</text><text x="1380" y="578">F93</text><text x="1235" y="679">F94</text><text x="1197" y="840">F91</text><text x="1002" y="872">F26</text><text x="1170" y="901">F56</text><text x="1227" y="919">F52</text><text x="1294" y="918">N41</text><text x="1482" y="841">H18</text><text x="1438" y="872">H23</text><text x="1369" y="887">H14</text><text x="1524" y="889">A75</text><text x="1462" y="909">H16</text><text x="1395" y="936">H12</text><text x="1530" y="933">A81</text><text x="1603" y="925">A91</text><text x="1481" y="985">A82</text><text x="1605" y="1000">A92</text>
              <text x="1033" y="971">F23</text><text x="1128" y="996">F35</text><text x="1188" y="996">F45</text><text x="1058" y="1017">F12</text><text x="953" y="975">F28</text><text x="1035" y="1061">F31</text><text x="1116" y="1085">H54</text><text x="1247" y="1046">F42</text><text x="1340" y="1024">N39</text><text x="1542" y="1043">C15</text><text x="1418" y="1080">N91</text><text x="876" y="1098">H71</text><text x="1021" y="1149">H91</text><text x="1138" y="1156">H65</text><text x="1212" y="1148">H53</text><text x="1183" y="1223">H62</text>
              <text x="1636" y="1057">K32</text><text x="1612" y="1065">A42</text><text x="1607" y="1082">A84</text><text x="1581" y="1093">A85</text><text x="1626" y="1082">A86</text><text x="1634" y="1082">A45</text><text x="1646" y="1080">K67</text><text x="1659" y="1071">K36</text><text x="1655" y="1082">D15</text><text x="1662" y="1096">K34</text>
              <text x="1313" y="1221">R42</text><text x="1481" y="1221">W34</text><text x="1530" y="1223">R56</text><text x="1641" y="1227">A98</text><text x="1674" y="1227">A63</text><text x="1409" y="1267">R32</text><text x="1503" y="1273">R14</text><text x="1653" y="1277">A67</text><text x="1308" y="1284">E53</text><text x="1249" y="1298">E45</text><text x="1522" y="1326">R93</text><text x="1622" y="1323">Y14</text><text x="1063" y="1313">V95</text><text x="980" y="1378">V15</text><text x="1099" y="1369">V14</text><text x="1141" y="1376">V94</text><text x="1337" y="1374">E41</text><text x="1518" y="1371">R21</text><text x="1632" y="1382">Y25</text><text x="1454" y="1399">R95</text><text x="1300" y="1427">E25</text><text x="1250" y="1440">E34</text><text x="976" y="1441">V31</text><text x="1067" y="1460">V42</text><text x="1170" y="1462">V35</text><text x="1576" y="1425">Y21</text>
              <text x="1113" y="1495">P56</text><text x="1285" y="1495">E21</text><text x="1347" y="1489">E91</text><text x="1406" y="1484">E32</text><text x="1460" y="1513">X91</text><text x="1510" y="1497">Y34</text><text x="1579" y="1506">Y35</text><text x="1223" y="1514">P67</text><text x="907" y="1512">V92</text><text x="1103" y="1551">P51</text><text x="1240" y="1559">P61</text><text x="1399" y="1543">X42</text><text x="1354" y="1575">X35</text><text x="1211" y="1598">T56</text><text x="1181" y="1605">T34</text><text x="1123" y="1608">P32</text><text x="1170" y="1621">T23</text><text x="1312" y="1614">P36</text><text x="942" y="1608">V93</text><text x="835" y="1634">V23</text><text x="1066" y="1637">P12</text><text x="1143" y="1649">P31</text><text x="1219" y="1633">T45</text><text x="1263" y="1641">P25</text><text x="1227" y="1651">P24</text><text x="1104" y="1660">P14</text><text x="1171" y="1664">T12</text><text x="1198" y="1676">P43</text><text x="943" y="1705">P75</text><text x="1051" y="1703">P47</text><text x="1127" y="1705">P72</text><text x="1183" y="1703">P17</text><text x="1085" y="1733">P85</text><text x="991" y="1757">P81</text>
            </g>
          </svg>

          <div class="legend">
            <div class="legend-bar"><span class="legend-value">1373</span><span class="legend-dot"></span></div>
            <div class="legend-end"><span>468</span><button class="handle low" type="button" aria-label="Minimum premium"></button></div>
            <div class="legend-end"><span>2520</span><button class="handle high" type="button" aria-label="Maximum premium"></button></div>
          </div>

          <div class="tooltip" role="tooltip">
            <strong>F42</strong>
            <p><span class="swatch"></span>average premium 1.372,61€</p>
          </div>
        </div>
      </section>
    </div>
    <footer class="foot">
      <a class="user" href="#"><svg width="40" height="40" viewBox="0 0 24 24"><path d="M12 12a4 4 0 1 0 0-8 4 4 0 0 0 0 8zm0 2c-2.700 0-8 1.300-8 4v2h16v-2c0-2.700-5.300-4-8-4z"/></svg>ceo.test</a>
      <div class="foot-tools">
        <button class="plain" type="button" aria-label="Theme"><svg width="40" height="40" viewBox="-20 -20 40 40"><circle r="10"/><path class="rays" d="M0-18v5M0 13v5M-18 0h5M13 0h5M-13-13l3 3M10 10 13 13M-13 13l3-3M10-10 13-13"/></svg></button>
        <button class="plain" type="button" aria-label="Log out"><svg width="40" height="40" viewBox="-20 -20 40 40"><path class="rays" d="M0-14V3M-7-9a12 12 0 1 0 14 0"/></svg></button>
      </div>
    </footer>
  </main>

  <aside class="tools" aria-label="Report tools">
    <div class="tools-box">
      <button class="plain" type="button" aria-label="Filter"><svg width="40" height="40" viewBox="-20 -20 40 40"><path d="M-12-16H12q2 0 1 2L4-1V14q0 2-2 1l-5-4Q-4 10-4 9V-1L-13-14q-1-2 1-2z"/></svg></button>
      <button class="plain" type="button" aria-label="Columns"><svg width="40" height="40" viewBox="-20 -20 40 40"><path fill-rule="evenodd" d="M-14-15H10q3 0 3 3V1Q10-1 6-1L-2 3-5 8 -4 13H-14q-3 0-3-3V-12q0-3 3-3zM-14-8V-2H-4V-8zM-1-8V-2H10V-8zM-14 1V10H-6L-4 5V1z"/><path fill-rule="evenodd" d="M-1 10Q2 3 8.500 3T18 10Q15 17 8.500 17T-1 10zM8.500 5.500a4.500 4.500 0 1 0 .010 0z"/><circle cx="8.500" cy="10" r="2.500"/></svg></button>
      <button class="plain" type="button" aria-label="Export"><svg width="40" height="40" viewBox="-20 -20 40 40"><path fill-rule="evenodd" d="M-11-17H4L13-8V13q0 3-3 3H-11q-3 0-3-3V-14q0-3 3-3zM-11-14V13H10V-5H2V-14zM-3 0H2V5H6L-.500 11-6 5H-3z"/></svg></button>
    </div>
  </aside>
</div>
</body>
</html>
```
FILE: styles.css
```css
* { box-sizing: border-box; }

body {
  margin: 0;
  background: #fff;
  color: #141618;
  font: 24px/32px Roboto, "Liberation Sans", sans-serif;
}

a { color: inherit; text-decoration: none; }
svg { display: block; }

.plain {
  display: flex;
  align-items: center;
  justify-content: center;
  padding: 0;
  border: 0;
  background: none;
  color: inherit;
}

.ink { fill: none; stroke: #141618; }
.s3 { stroke-width: 3; }
.faded { opacity: .4; }

/* browser frame */
.browser {
  background: #e2e2e2;
  border-radius: 20px 20px 0 0;
  border-bottom: 2px solid #e2e2e4;
}

.tabstrip {
  display: flex;
  align-items: flex-end;
  height: 80px;
  padding: 0 12px 0 42px;
}

.lights { display: flex; gap: 16px; width: 142px; padding-bottom: 27px; }
.light { width: 24px; height: 24px; border-radius: 50%; }
.light.red { background: #e8784e; }
.light.yellow { background: #f6c12e; }
.light.green { background: #33c948; }

.browser-tab {
  position: relative;
  display: flex;
  align-items: center;
  justify-content: flex-end;
  width: 464px;
  height: 68px;
  padding: 0 12px 12px 0;
  border-radius: 20px 20px 0 0;
  background: #fff;
}
.browser-tab::before,
.browser-tab::after {
  content: "";
  position: absolute;
  bottom: 0;
  width: 24px;
  height: 24px;
}
.browser-tab::before { right: 100%; background: radial-gradient(circle at 0 0, transparent 24px, #fff 24px); }
.browser-tab::after { left: 100%; background: radial-gradient(circle at 100% 0, transparent 24px, #fff 24px); }

.new-tab { margin: 0 auto 20px 20px; }
.tab-search {
  width: 56px;
  height: 56px;
  margin-bottom: 12px;
  border-radius: 18px;
  background: #f1f1ef;
}

.toolbar {
  display: flex;
  align-items: center;
  height: 92px;
  padding: 0 8px;
  border-radius: 16px 16px 0 0;
  background: #fff;
}
.tool { width: 72px; height: 48px; }

.address {
  display: flex;
  flex: 1;
  align-items: center;
  height: 68px;
  margin: 0 268px 0 16px;
  padding: 0 30px 0 10px;
  border-radius: 34px;
  background: #efedee;
}
.address input {
  flex: 1;
  border: 0;
  background: none;
  font: inherit;
}
.site-info { width: 48px; height: 48px; border-radius: 50%; background: #fff; }

/* application frame */
.app {
  display: grid;
  grid-template-columns: 128px 1fr 128px;
  border-radius: 0 0 20px 20px;
  background: #fcfdff;
}

.side { fill: #a5a6a9; }
.logo {
  display: flex;
  justify-content: center;
  height: 131px;
  margin-left: 16px;
  padding-top: 34px;
}
.side-nav {
  margin-left: 16px;
  border-radius: 20px 0 0 20px;
  background: #f5f8f7;
}
.side-nav a,
.side-home {
  display: flex;
  align-items: center;
  justify-content: center;
  height: 112px;
}
.side-home { margin-left: 16px; }
.green-icon { fill: #62a843; }
.current { fill: #202224; }

.main { padding: 16px 0; }

.tabs { display: flex; gap: 8px; }
.tabs a {
  height: 64px;
  padding: 16px 64px;
  border-radius: 16px 16px 0 0;
  background: #fff;
  color: #a5a6a9;
}
.tabs .active { background: #f5f8f7; color: #202224; font-weight: 500; }

.panel {
  padding: 64px;
  border-radius: 0 0 0 16px;
  background: #f5f8f7;
}
.card { padding: 64px; border-radius: 16px; background: #fff; }
.card-head { display: flex; align-items: center; justify-content: space-between; }
h1 { margin: 0; font-size: 25px; font-weight: 500; }

.picker { position: relative; }
.picker select {
  width: 318px;
  height: 64px;
  padding: 0 64px 0 32px;
  border: 0;
  border-radius: 16px;
  background: #f5f8f7;
  color: inherit;
  font: inherit;
  appearance: none;
}
.picker svg { position: absolute; top: 20px; right: 20px; pointer-events: none; }

/* map */
.map-wrap { position: relative; }
.map { width: 100%; height: auto; overflow: visible; }
.map path { stroke: rgba(220, 235, 190, .5); stroke-width: 1; vector-effect: non-scaling-stroke; }

.north-west { transform: translate(740px, 420px) scale(.38265, .33333); }
.north-east { transform: translate(1240px, 420px) scale(.38265, .33333); }
.west { transform: translate(740px, 780px) scale(.35714, .33333); }
.east { transform: translate(1240px, 840px) scale(.35714, .33333); }
.mid-west { transform: translate(740px, 1180px) scale(.35714, .33333); }
.south-west { transform: translate(740px, 1460px) scale(.40816, .33333); }
.south-east { transform: translate(1240px, 1160px) scale(.33333); }

.c0 { fill: #2b8c43; }
.c1 { fill: #3b9445; }
.c2 { fill: #489b49; }
.c3 { fill: #55a04b; }
.c4 { fill: #60a54e; }
.c5 { fill: #69a850; }
.c6 { fill: #70ab53; }
.c7 { fill: #7fb155; }
.c8 { fill: #87b557; }
.c9 { fill: #97bc5a; }
.c10 { fill: #9dc05c; }
.c11 { fill: #b2ca60; }
.c12 { fill: #c9d466; }
.yellow { fill: #e7e06a; }
.hot1 { fill: #e8784e; }
.hot2 { fill: #da6038; }
.hot3 { fill: #c42020; }
.line { fill: none; }
.map .water path { fill: #fff; stroke: none; }
.map .neutral path { fill: #e6e6e6; stroke: #e6e6e6; stroke-width: 2; }

.labels { fill: #fff; font-size: 24px; font-weight: 700; text-anchor: middle; }

.legend {
  position: absolute;
  bottom: 11px;
  left: 2px;
  display: flex;
  justify-content: space-between;
  width: 336px;
}
.legend-end {
  position: relative;
  display: flex;
  flex-direction: column;
  align-items: center;
  gap: 6px;
  width: 56px;
  color: #e6e6e6;
}
.handle {
  width: 16px;
  height: 50px;
  padding: 0;
  border: 2px solid #c4cfc0;
  border-radius: 8px;
}
.handle.low { background: #2b8c43; }
.handle.high { background: #c42020; }
.legend-bar {
  position: absolute;
  right: 28px;
  bottom: 5px;
  left: 28px;
  height: 40px;
  background: linear-gradient(90deg, #2b8c43, #60a54e 17%, #87b557 27%, #b2ca60 36%, #e7e06a 45%, #e7e06a 54%, #edac5c 66%, #e8784e 76%, #da6038 84%, #c42020 96%);
}
.legend-value { position: absolute; bottom: 48px; left: 44%; transform: translateX(-50%); line-height: 32px; }
.legend-dot {
  position: absolute;
  top: 8px;
  left: 44%;
  width: 24px;
  height: 24px;
  margin-left: -12px;
  border: 4px solid #fff;
  border-radius: 50%;
}

.tooltip {
  position: absolute;
  top: 47.850%;
  left: 50.100%;
  padding: 26px 20px 16px;
  border-radius: 6px;
  background: #fff;
  box-shadow: 2px 4px 20px rgba(0, 0, 0, .2);
  font-size: 25px;
  white-space: nowrap;
}
.tooltip strong { display: block; font-weight: 700; line-height: 32px; }
.tooltip p { display: flex; align-items: center; gap: 14px; margin: 0; line-height: 48px; }
.swatch { width: 20px; height: 20px; border-radius: 50%; background: #e7e06a; }

/* footer and tools */
.foot { display: flex; justify-content: space-between; height: 112px; color: #a5a6a9; fill: #a5a6a9; }
.user { display: flex; align-items: center; gap: 16px; }
.foot-tools { display: flex; border-radius: 0 0 16px 16px; background: #f5f8f7; }
.foot-tools button { width: 112px; fill: #a5a6a9; }
.foot-tools .rays { fill: none; stroke: #a5a6a9; stroke-width: 3; }

.tools { padding: 80px 16px 0 0; }
.tools-box { border-radius: 0 16px 16px 0; background: #f5f8f7; fill: #141618; }
.tools-box button { width: 112px; height: 112px; }
```
